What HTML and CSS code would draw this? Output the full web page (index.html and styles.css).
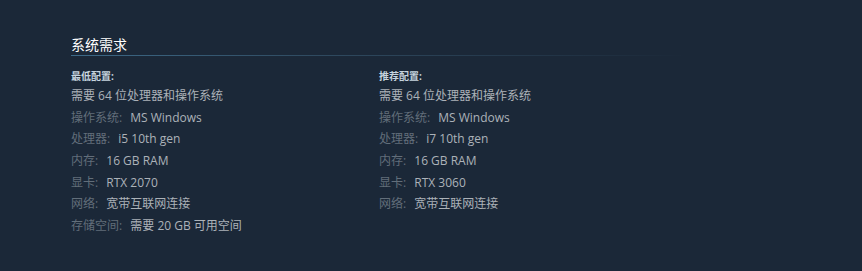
FILE: index.html
```html
<!DOCTYPE html>
<html lang="zh-CN">
<head>
<meta charset="utf-8">
<link rel="stylesheet" href="styles.css">
</head>
<body>
<div class="sysreq">
  <h2 class="sysreq-title">系统需求</h2>
  <div class="sysreq-cols">
    <div class="sysreq-col">
      <div class="sysreq-head">最低配置:</div>
      <ul class="sysreq-list">
        <li>需要 64 位处理器和操作系统</li>
        <li><span class="lbl">操作系统:</span> MS Windows</li>
        <li><span class="lbl">处理器:</span> i5 10th gen</li>
        <li><span class="lbl">内存:</span> 16 GB RAM</li>
        <li><span class="lbl">显卡:</span> RTX 2070</li>
        <li><span class="lbl">网络:</span> 宽带互联网连接</li>
        <li><span class="lbl">存储空间:</span> 需要 20 GB 可用空间</li>
      </ul>
    </div>
    <div class="sysreq-col">
      <div class="sysreq-head">推荐配置:</div>
      <ul class="sysreq-list">
        <li>需要 64 位处理器和操作系统</li>
        <li><span class="lbl">操作系统:</span> MS Windows</li>
        <li><span class="lbl">处理器:</span> i7 10th gen</li>
        <li><span class="lbl">内存:</span> 16 GB RAM</li>
        <li><span class="lbl">显卡:</span> RTX 3060</li>
        <li><span class="lbl">网络:</span> 宽带互联网连接</li>
      </ul>
    </div>
  </div>
</div>
</body>
</html>
```
FILE: styles.css
```css
html, body {
  margin: 0;
  padding: 0;
  background: #1b2838;
  height: 100%;
}
body {
  font-family: "Open Sans", "Noto Sans CJK SC", sans-serif;
  color: #acb2b8;
}
.sysreq {
  width: 616px;
  padding: 36px 0 0 71px;
}
.sysreq-title {
  margin: 0;
  font-size: 14px;
  font-weight: normal;
  color: #ffffff;
  line-height: 18px;
  background-image: linear-gradient(to right, #3d6a88 0%, #2f4a60 40%, rgba(47,74,96,0) 100%);
  background-size: 100% 1px;
  background-repeat: no-repeat;
  background-position: left bottom;
  height: 20px;
  box-sizing: border-box;
}
.sysreq-cols {
  display: flex;
  margin-top: 13px;
}
.sysreq-col {
  width: 308px;
}
.sysreq-head {
  font-size: 10px;
  font-weight: bold;
  color: #c6d4df;
  line-height: 14px;
  margin-bottom: 5px;
}
.sysreq-list {
  list-style: none;
  margin: 0;
  padding: 0;
  font-size: 12px;
}
.sysreq-list li {
  line-height: 16.67px;
  margin-bottom: 5px;
}
.lbl {
  color: #626e7a;
  margin-right: 5px;
}
```
